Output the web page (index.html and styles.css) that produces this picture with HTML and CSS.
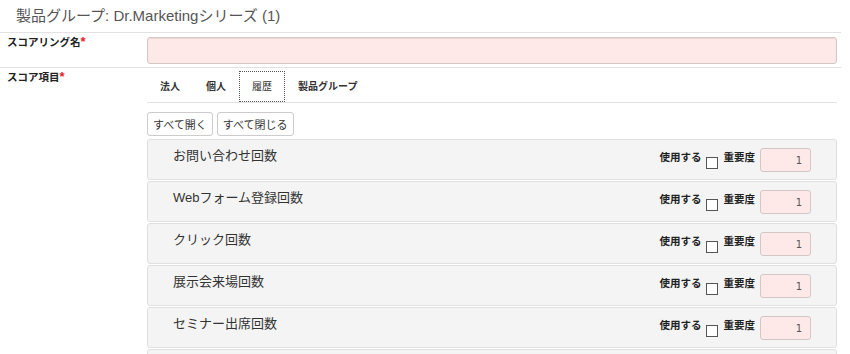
FILE: index.html
```html
<!DOCTYPE html>
<html lang="ja">
<head>
    <meta charset="UTF-8">
    <title>スコアリング設定</title>
    <link rel="stylesheet" href="styles.css">
</head>
<body>
    <div class="page">
        <div class="group-title">製品グループ: Dr.Marketingシリーズ (1)</div>

        <div class="form-row">
            <div class="form-label">スコアリング名<span class="req">*</span></div>
            <div class="form-field">
                <input type="text" class="name-input">
            </div>
        </div>

        <div class="form-row">
            <div class="form-label">スコア項目<span class="req">*</span></div>
            <div class="form-field">
                <ul class="tabs">
                    <li class="tab">法人</li>
                    <li class="tab">個人</li>
                    <li class="tab active">履歴</li>
                    <li class="tab">製品グループ</li>
                </ul>
                <div class="toolbar">
                    <button class="btn">すべて開く</button>
                    <button class="btn">すべて閉じる</button>
                </div>

                <div class="panel">
                    <div class="panel-title">お問い合わせ回数</div>
                    <div class="controls">
                        <span class="ctl-label">使用する</span>
                        <input type="checkbox" class="check">
                        <span class="ctl-label">重要度</span>
                        <input type="text" class="weight" value="1">
                    </div>
                </div>
                <div class="panel">
                    <div class="panel-title">Webフォーム登録回数</div>
                    <div class="controls">
                        <span class="ctl-label">使用する</span>
                        <input type="checkbox" class="check">
                        <span class="ctl-label">重要度</span>
                        <input type="text" class="weight" value="1">
                    </div>
                </div>
                <div class="panel">
                    <div class="panel-title">クリック回数</div>
                    <div class="controls">
                        <span class="ctl-label">使用する</span>
                        <input type="checkbox" class="check">
                        <span class="ctl-label">重要度</span>
                        <input type="text" class="weight" value="1">
                    </div>
                </div>
                <div class="panel">
                    <div class="panel-title">展示会来場回数</div>
                    <div class="controls">
                        <span class="ctl-label">使用する</span>
                        <input type="checkbox" class="check">
                        <span class="ctl-label">重要度</span>
                        <input type="text" class="weight" value="1">
                    </div>
                </div>
                <div class="panel">
                    <div class="panel-title">セミナー出席回数</div>
                    <div class="controls">
                        <span class="ctl-label">使用する</span>
                        <input type="checkbox" class="check">
                        <span class="ctl-label">重要度</span>
                        <input type="text" class="weight" value="1">
                    </div>
                </div>
                <div class="panel">
                    <div class="panel-title">資料ダウンロード回数</div>
                    <div class="controls">
                        <span class="ctl-label">使用する</span>
                        <input type="checkbox" class="check">
                        <span class="ctl-label">重要度</span>
                        <input type="text" class="weight" value="1">
                    </div>
                </div>
            </div>
        </div>
    </div>
</body>
</html>
```

FILE: styles.css
```css
body {
    margin: 0;
    font-family: "Liberation Sans", "Noto Sans CJK JP", sans-serif;
    color: #333;
    background: white;
}
.page {
    width: 841px;
}
.group-title {
    padding: 6px 16px;
    font-size: 15px;
    line-height: 20px;
    color: #555;
}

.form-row {
    display: flex;
    border-top: 1px solid #e2e2e2;
}
.form-label {
    width: 147px;
    flex-shrink: 0;
    box-sizing: border-box;
    padding: 2px 0 0 7px;
    font-size: 10.5px;
    line-height: 14px;
    font-weight: bold;
    color: #222;
}
.req {
    font-size: 13px;
    line-height: 1;
    color: #e8202a;
}
.form-field {
    flex: 1;
    padding: 4px 4px 3px 0;
}
.name-input {
    display: block;
    width: 100%;
    height: 27px;
    box-sizing: border-box;
    margin: 0;
    border: 1px solid #d2c8c8;
    border-radius: 3px;
    background: #fee8e8;
    box-shadow: inset 0 1px 1px rgba(0, 0, 0, 0.08);
}

.tabs {
    display: flex;
    list-style: none;
    margin: -1px 0 0;
    padding: 0;
    border-bottom: 1px solid #e2e2e2;
}
.tab {
    padding: 0 12px;
    line-height: 29px;
    font-size: 10px;
    font-weight: bold;
    color: #333;
    border: 1px solid transparent;
}
.tab.active {
    border: 1px dotted #555;
    font-weight: normal;
}

.toolbar {
    display: flex;
    gap: 4px;
    margin-top: 9px;
}
.btn {
    height: 24px;
    padding: 0 5px;
    font-family: inherit;
    font-size: 11px;
    color: #333;
    background: white;
    border: 1px solid #ccc;
    border-radius: 3px;
}

.panel {
    display: flex;
    justify-content: space-between;
    align-items: flex-start;
    height: 41px;
    box-sizing: border-box;
    margin-top: 1px;
    padding: 8px 25px;
    background: #f4f4f4;
    border: 1px solid #e0e0e0;
    border-radius: 3px;
}
.toolbar + .panel {
    margin-top: 3px;
}
.panel-title {
    font-size: 13px;
    line-height: 16px;
    color: #333;
}
.controls {
    display: flex;
    align-items: flex-start;
}
.ctl-label {
    font-size: 10.5px;
    line-height: 18px;
    font-weight: bold;
    color: #222;
}
.check {
    appearance: none;
    width: 12px;
    height: 12px;
    margin: 9px 6px 0 4px;
    border: 1px solid #555;
    background: white;
}
.weight {
    width: 51px;
    height: 24px;
    box-sizing: border-box;
    margin: 0 0 0 5px;
    padding: 0 8px 0 0;
    text-align: right;
    font-family: "DejaVu Sans", sans-serif;
    font-size: 10px;
    color: #555;
    border: 1px solid #d2c8c8;
    border-radius: 3px;
    background: #fee8e8;
}
```
